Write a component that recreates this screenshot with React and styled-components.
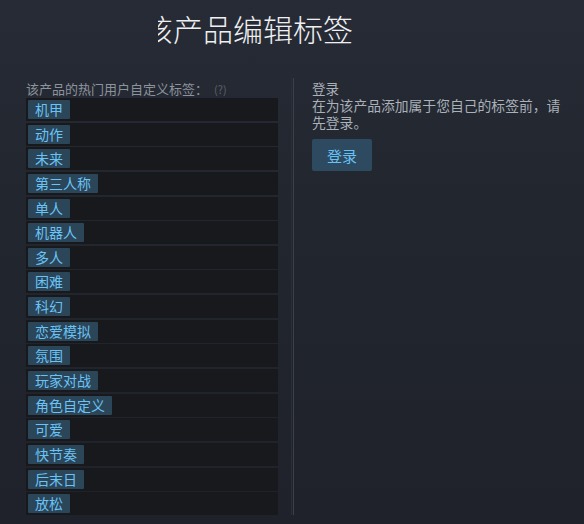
import React from 'react';
import styled, { createGlobalStyle } from 'styled-components';

const GlobalStyle = createGlobalStyle`
  html, body {
    margin: 0;
    padding: 0;
    background: #22252d;
  }
  body {
    font-family: "Noto Sans CJK SC", "Noto Sans", sans-serif;
  }
`;

const Pagina = styled.div`
  width: 584px;
  height: 524px;
  overflow: hidden;
  background: linear-gradient(180deg, #272b35 0%, #22262f 40%, #1f222a 100%);
`;

// titulo cortado por la izquierda, como en la captura
const TituloRecorte = styled.div`
  margin-left: 158px;
  padding-top: 10px;
  height: 80px;
  box-sizing: border-box;
  overflow: hidden;
`;

const Titulo = styled.h1`
  margin: 0 0 0 -15px;
  font-size: 30px;
  line-height: 36px;
  font-weight: 300;
  color: #eef0f2;
  white-space: nowrap;
`;

const Contenido = styled.div`
  display: flex;
  padding-left: 26px;
`;

const ColumnaTags = styled.div`
  width: 252px;
  display: flex;
  flex-direction: column;
  gap: 1.65px;
`;

const Encabezado = styled.div`
  font-size: 13px;
  line-height: 17px;
  color: #8b939c;
  margin-bottom: -1.65px;
`;

const Ayuda = styled.span`
  font-size: 11px;
  color: #5b636d;
  margin-left: 6px;
`;

const Fila = styled.div`
  height: 23px;
  background: #18191d;
  display: flex;
  align-items: center;
  padding-left: 2px;
`;

const Tag = styled.span`
  height: 19px;
  line-height: 19px;
  padding: 0 7px;
  background: #2b4559;
  color: #6ac3f5;
  font-size: 14px;
  border-radius: 1px;
`;

const Divisor = styled.div`
  width: 1px;
  margin: -2px 18px 0 15px;
  background: #3b404b;
  box-shadow: -2px 0 0 #2a2e37;
`;

const ColumnaLogin = styled.div`
  width: 258px;
  color: #a9b1b9;
`;

const LoginTitulo = styled.div`
  font-size: 13.5px;
  line-height: 17px;
`;

const LoginTexto = styled.p`
  margin: 0;
  font-size: 13.8px;
  line-height: 17px;
`;

const Boton = styled.button`
  margin-top: 8px;
  width: 60px;
  height: 32px;
  border: none;
  border-radius: 2px;
  background: #2e4a60;
  color: #67c1f5;
  font-family: inherit;
  font-size: 15px;
  padding: 0;
`;

const tags = [
  '机甲', '动作', '未来', '第三人称', '单人', '机器人', '多人', '困难', '科幻',
  '恋爱模拟', '氛围', '玩家对战', '角色自定义', '可爱', '快节奏', '后末日', '放松',
];

const App = () => {
  return (
    <Pagina>
      <GlobalStyle />
      <TituloRecorte>
        <Titulo>该产品编辑标签</Titulo>
      </TituloRecorte>
      <Contenido>
        <ColumnaTags>
          <Encabezado>
            该产品的热门用户自定义标签：<Ayuda>(?)</Ayuda>
          </Encabezado>
          {tags.map((t) => (
            <Fila key={t}>
              <Tag>{t}</Tag>
            </Fila>
          ))}
        </ColumnaTags>
        <Divisor />
        <ColumnaLogin>
          <LoginTitulo>登录</LoginTitulo>
          <LoginTexto>在为该产品添加属于您自己的标签前，请先登录。</LoginTexto>
          <Boton>登录</Boton>
        </ColumnaLogin>
      </Contenido>
    </Pagina>
  );
};

export default App;
